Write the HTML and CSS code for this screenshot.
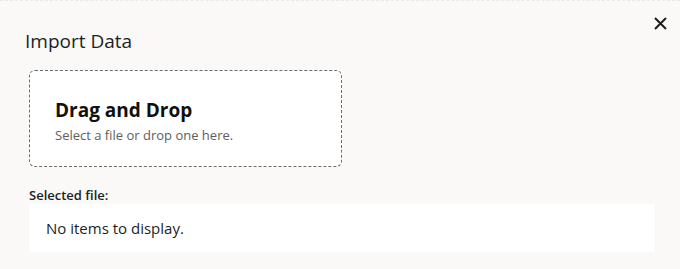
FILE: index.html
```html
<!DOCTYPE html>
<html lang="en">
<head>
<meta charset="utf-8">
<title>Import Data</title>
<link rel="stylesheet" href="styles.css">
</head>
<body>
<div class="dialog">
  <button class="close" aria-label="Close">
    <svg width="13" height="13" viewBox="0 0 13 13"><path d="M1 1 L12 12 M12 1 L1 12" stroke="#201f1e" stroke-width="2" fill="none"/></svg>
  </button>
  <h1 class="title">Import Data</h1>
  <div class="content">
    <div class="dropzone">
      <div class="dz-title">Drag and Drop</div>
      <div class="dz-sub">Select a file or drop one here.</div>
    </div>
    <div class="label">Selected file:</div>
    <div class="list">No items to display.</div>
  </div>
</div>
</body>
</html>
```
FILE: styles.css
```css
html, body {
  margin: 0;
  padding: 0;
  background: #faf9f8;
}
body {
  font-family: "Open Sans", "Noto Sans", sans-serif;
  color: #201f1e;
}
.dialog {
  position: relative;
  width: 680px;
  height: 269px;
  box-sizing: border-box;
  border-top: 1px dashed #ebe9e6;
  padding-top: 27px;
}
.close {
  position: absolute;
  top: 16px;
  left: 654px;
  width: 13px;
  height: 13px;
  padding: 0;
  margin: 0;
  border: 0;
  background: none;
  display: block;
}
.close svg { display: block; }
.title {
  margin: 0 0 0 25px;
  font-size: 19px;
  line-height: 27px;
  font-weight: 400;
  color: #201f1e;
}
.content {
  padding: 15px 25px 0 29px;
}
.dropzone {
  box-sizing: border-box;
  width: 313px;
  height: 97px;
  border: 1px dashed #6e6d6b;
  border-radius: 6px;
  background: #ffffff;
  padding: 27px 0 0 25px;
}
.dz-title {
  font-size: 19px;
  line-height: 25px;
  font-weight: 700;
  color: #11100f;
}
.dz-sub {
  margin-top: 4px;
  font-size: 13px;
  line-height: 17px;
  color: #605e5c;
}
.label {
  margin-top: 20px;
  font-size: 13px;
  line-height: 17px;
  font-weight: 600;
  color: #201f1e;
}
.list {
  height: 48px;
  background: #ffffff;
  display: flex;
  align-items: center;
  padding-left: 17px;
  font-size: 15px;
  color: #201f1e;
}
```
